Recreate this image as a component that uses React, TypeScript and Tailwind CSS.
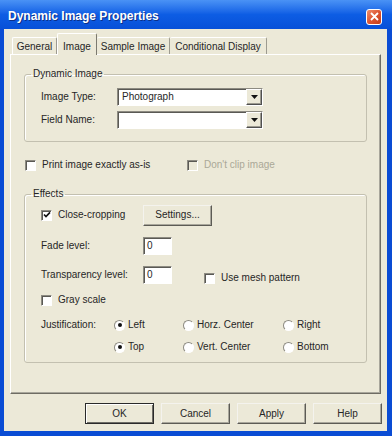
import React from "react";

function Check({ checked = false, disabled = false }: { checked?: boolean; disabled?: boolean }) {
  return (
    <div
      className={`w-[11px] h-[11px] shrink-0 border border-t-[#8d8b82] border-l-[#8d8b82] border-b-white border-r-white shadow-[inset_1px_1px_0_#5a5954] flex items-center justify-center ${
        disabled ? "bg-[#ece9d8]" : "bg-white"
      }`}
    >
      {checked && (
        <svg width="8" height="8" viewBox="0 0 8 8">
          <path d="M1 3.5 L3 5.6 L7 1.4" fill="none" stroke="#111" strokeWidth="1.7" />
        </svg>
      )}
    </div>
  );
}

function Radio({ checked = false, label }: { checked?: boolean; label: string }) {
  return (
    <div className="flex items-center gap-[3px]">
      <div className="w-[11px] h-[11px] shrink-0 rounded-full bg-white border border-t-[#8d8b82] border-l-[#8d8b82] border-b-white border-r-white flex items-center justify-center">
        {checked && <div className="w-[4px] h-[4px] rounded-full bg-[#111]" />}
      </div>
      <span>{label}</span>
    </div>
  );
}

function Combo({ value = "" }: { value?: string }) {
  return (
    <div className="w-[146px] h-[18px] bg-white border border-t-[#8d8b82] border-l-[#8d8b82] border-b-white border-r-white shadow-[inset_1px_1px_0_#5a5954] flex items-stretch">
      <div className="flex-1 flex items-center pl-[4px]">{value}</div>
      <div className="w-[16px] bg-[#ece9d8] border border-t-white border-l-white border-b-[#505050] border-r-[#505050] shadow-[inset_-1px_-1px_0_#9c9a90] flex items-center justify-center">
        <svg width="7" height="4" viewBox="0 0 7 4">
          <polygon points="0,0 7,0 3.5,4" fill="#111" />
        </svg>
      </div>
    </div>
  );
}

function TextBox({ value }: { value: string }) {
  return (
    <div className="w-[29px] h-[18px] bg-white border border-t-[#8d8b82] border-l-[#8d8b82] border-b-white border-r-white shadow-[inset_1px_1px_0_#5a5954] flex items-center pl-[3px]">
      {value}
    </div>
  );
}

function Button({ label, def = false, w = "w-[69px]" }: { label: string; def?: boolean; w?: string }) {
  return (
    <div
      className={`${w} h-[21px] bg-[#ece9d8] flex items-center justify-center ${
        def
          ? "border border-[#2a2a2a] shadow-[inset_1px_1px_0_#fff,inset_-1px_-1px_0_#6e6d66]"
          : "border border-t-[#f4f3ee] border-l-[#f4f3ee] border-b-[#5c5b55] border-r-[#5c5b55] shadow-[inset_-1px_-1px_0_#a9a79c]"
      }`}
    >
      {label}
    </div>
  );
}

export default function App() {
  return (
    <div className="w-[392px] h-[436px] bg-[#0a4cd4] flex flex-col font-['Liberation_Sans',Arial,sans-serif] text-[10px] leading-[12px] text-[#262626] overflow-hidden">
      {/* Title bar */}
      <div className="h-[29px] shrink-0 flex items-center pl-[8px] pr-[10px] bg-gradient-to-b from-[#4a92f5] via-[#0d5de4] to-[#0750d8]">
        <span className="flex-1 pt-[3px] text-white font-bold text-[12px] leading-[14px] [text-shadow:1px_1px_0_#0b2f87]">
          Dynamic Image Properties
        </span>
        <div className="w-[16px] h-[16px] mt-[4px] rounded-[3px] border border-white bg-gradient-to-br from-[#ef8f6d] via-[#dc5532] to-[#c43c18] flex items-center justify-center">
          <svg width="9" height="9" viewBox="0 0 9 9">
            <path d="M1 1 L8 8 M8 1 L1 8" stroke="#fff" strokeWidth="1.8" />
          </svg>
        </div>
      </div>

      {/* Body */}
      <div className="flex-1 ml-[4px] mr-[5px] mb-[5px] bg-[#ece9d8] flex flex-col pt-[4px] px-[6px]">
        {/* Tabs */}
        <div className="h-[21px] flex items-end pl-[2px]">
          <div className="w-[45px] h-[17px] flex items-center justify-center pt-[1px] border-t border-l border-white border-r border-r-[#9d9b90] rounded-t-[2px]">
            General
          </div>
          <div className="relative z-10 w-[40px] h-[22px] -mb-[1px] bg-[#ece9d8] flex items-start justify-center pt-[7px] border-t border-l border-white border-r border-r-[#7c7a70] rounded-t-[2px]">
            Image
          </div>
          <div className="w-[73px] h-[17px] flex items-center justify-center pt-[1px] border-t border-white border-r border-r-[#9d9b90] rounded-t-[2px]">
            Sample Image
          </div>
          <div className="w-[97px] h-[17px] flex items-center justify-center pt-[1px] border-t border-white border-r border-r-[#9d9b90] rounded-t-[2px]">
            Conditional Display
          </div>
        </div>

        {/* Panel */}
        <div className="h-[340px] border-t border-l border-white border-r border-b border-r-[#6e6c63] border-b-[#6e6c63] shadow-[inset_-1px_-1px_0_#a9a79c] pt-[13px] px-[13px]">
          <fieldset className="h-[74px] border border-[#c3c0b0] rounded-[3px] shadow-[inset_1px_1px_0_#fff]">
            <legend className="ml-[6px] px-[2px] leading-[12px]">Dynamic Image</legend>
            <div className="pl-[16px] pt-[8px] flex flex-col gap-[5px]">
              <div className="flex items-center h-[18px]">
                <span className="w-[76px]">Image Type:</span>
                <Combo value="Photograph" />
              </div>
              <div className="flex items-center h-[18px]">
                <span className="w-[76px]">Field Name:</span>
                <Combo />
              </div>
            </div>
          </fieldset>

          <div className="mt-[17px] h-[12px] flex items-center pl-[1px]">
            <div className="w-[162px] flex items-center gap-[6px]">
              <Check />
              <span>Print image exactly as-is</span>
            </div>
            <div className="flex items-center gap-[6px] text-[#aaa897]">
              <Check disabled />
              <span>Don't clip image</span>
            </div>
          </div>

          <fieldset className="mt-[17px] h-[175px] border border-[#c3c0b0] rounded-[3px] shadow-[inset_1px_1px_0_#fff]">
            <legend className="ml-[6px] px-[2px] leading-[12px]">Effects</legend>
            <div className="pl-[16px] pt-[5px] flex flex-col">
              <div className="h-[20px] flex items-center">
                <div className="w-[102px] flex items-center gap-[6px]">
                  <Check checked />
                  <span>Close-cropping</span>
                </div>
                <Button label="Settings..." />
              </div>
              <div className="mt-[12px] h-[18px] flex items-center">
                <span className="w-[102px]">Fade level:</span>
                <TextBox value="0" />
              </div>
              <div className="mt-[11px] h-[18px] flex items-center">
                <span className="w-[102px]">Transparency level:</span>
                <TextBox value="0" />
                <div className="ml-[32px] mt-[6px] flex items-center gap-[6px]">
                  <Check />
                  <span>Use mesh pattern</span>
                </div>
              </div>
              <div className="mt-[10px] h-[12px] flex items-center gap-[6px]">
                <Check />
                <span>Gray scale</span>
              </div>
              <div className="mt-[12px] h-[14px] flex items-center">
                <span className="w-[73px]">Justification:</span>
                <div className="w-[69px]">
                  <Radio checked label="Left" />
                </div>
                <div className="w-[100px]">
                  <Radio label="Horz. Center" />
                </div>
                <Radio label="Right" />
              </div>
              <div className="mt-[8px] h-[14px] flex items-center">
                <span className="w-[73px]" />
                <div className="w-[69px]">
                  <Radio checked label="Top" />
                </div>
                <div className="w-[100px]">
                  <Radio label="Vert. Center" />
                </div>
                <Radio label="Bottom" />
              </div>
            </div>
          </fieldset>
        </div>

        {/* Buttons */}
        <div className="mt-[9px] flex justify-end gap-[7px] -mr-[1px]">
          <Button label="OK" def />
          <Button label="Cancel" />
          <Button label="Apply" />
          <Button label="Help" />
        </div>
      </div>
    </div>
  );
}
